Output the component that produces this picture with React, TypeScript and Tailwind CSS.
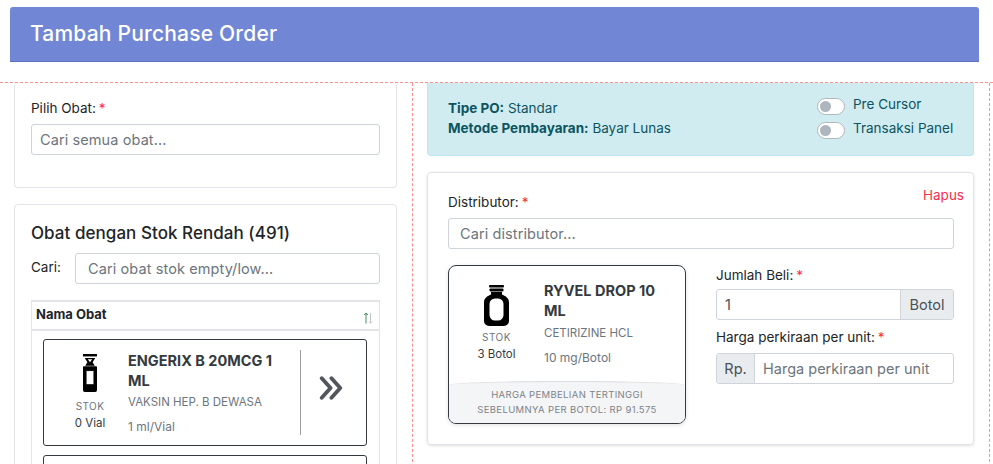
import React from 'react';

const font = "font-['Inter','Liberation_Sans',sans-serif]";

const Req = () => <span className="ml-[3px] text-[#ff2d3d]">*</span>;

const inputClass =
  'w-full h-[31px] border border-[#ced4da] rounded-[3px] bg-white text-[14.5px] tracking-[0.1px] text-[#212529] placeholder:text-[#6c757d] outline-none';

const VialIcon: React.FC = () => (
  <svg width="14" height="38" viewBox="0 0 16 39" preserveAspectRatio="none" className="block">
    <path d="M0 0h16v2.500H0z" fill="#000" />
    <path d="M2 4h12L11 8.500 13.500 12h-11L5 8.500z" fill="#000" />
    <path d="M5.500 5.500h5L8 8.500z" fill="#fff" />
    <path d="M1 12.500h14a1 1 0 0 1 1 1V37a2 2 0 0 1-2 2H2a2 2 0 0 1-2-2V13.500a1 1 0 0 1 1-1z" fill="#000" />
    <rect x="3.500" y="17" width="9" height="14.500" rx="1" fill="#fff" stroke="#000" />
  </svg>
);

const BottleIcon: React.FC = () => (
  <svg width="25" height="41" viewBox="0 0 25 41" className="block">
    <rect x="5" y="0" width="15" height="2.500" rx="1" fill="#000" />
    <rect x="5.500" y="3.500" width="14" height="3" rx="1" fill="#000" />
    <path d="M7 7h11v2.500c3 1.500 7 3 7 8V36a5 5 0 0 1-5 5H5a5 5 0 0 1-5-5V17.500c0-5 4-6.500 7-8z" fill="#000" />
    <rect x="5.500" y="13.500" width="14" height="22" rx="5.500" fill="#fff" />
  </svg>
);

const DoubleChevron: React.FC = () => (
  <svg width="24" height="24" viewBox="0 0 25 26" fill="none" stroke="#52565c" strokeWidth="4.200" strokeLinecap="round" strokeLinejoin="round">
    <path d="M2.500 2.500 12 13 2.500 23.500" />
    <path d="M13 2.500 22.500 13 13 23.500" />
  </svg>
);

const SortIcon: React.FC = () => (
  <svg width="10" height="12" viewBox="0 0 10 12" fill="none" strokeWidth="1">
    <path d="M3 11.500V1M1 3l2-2 2 2" stroke="#3f8f5f" />
    <path d="M7.500 1v10M5.800 9.500l1.700 1.700 1.700-1.700" stroke="#c3c7cc" />
  </svg>
);

const Toggle: React.FC<{ label: string }> = ({ label }) => (
  <div className="flex items-start gap-[8px] h-[24px]">
    <div className="mt-[3px] w-[28px] h-[17px] shrink-0 rounded-full border border-[#b1b7bd] bg-white flex items-center pl-[2px]">
      <div className="w-[11px] h-[11px] rounded-full bg-[#adb5bd]" />
    </div>
    <span className="text-[13.500px] leading-[18px] whitespace-nowrap text-[#0c5460]">{label}</span>
  </div>
);

const App: React.FC = () => {
  return (
    <div className={`${font} w-[993px] h-[464px] overflow-hidden bg-white text-[#212529]`}>
      <div className="pt-[7px] pl-[10px] pr-[14px]">
        <div className="h-[55px] rounded-t-[3px] bg-[#7286d6] border-b border-[#5e70bb] flex items-center pl-[20px]">
          <h1 className="text-[21px] tracking-[0.2px] font-medium text-white">Tambah Purchase Order</h1>
        </div>
      </div>

      <div className="mt-[20px] flex border-t border-dashed border-[#ff8f8f] h-[400px]">
        <div className="w-[412px] shrink-0 pl-[14px] pr-[15px]">
          <div className="h-[105px] border border-[#e2e4e8] border-t-0 rounded-[4px] px-[16px] pt-[15px]">
            <label className="block text-[13.500px] leading-[20px] mb-[6px]">Pilih Obat:<Req /></label>
            <input className={`${inputClass} px-[8px]`} placeholder="Cari semua obat..." />
          </div>

          <div className="mt-[16px] border border-[#e2e4e8] rounded-[4px] px-[16px] pt-[16px] h-[300px]">
            <h2 className="text-[17px] font-medium leading-[24px] tracking-[0.05px]">Obat dengan Stok Rendah (491)</h2>
            <div className="mt-[8px] flex items-center">
              <span className="w-[44px] shrink-0 text-[13.500px] -mt-[2px]">Cari:</span>
              <input className={`${inputClass} px-[12px]`} placeholder="Cari obat stok empty/low..." />
            </div>
            <div className="mt-[16px] border-x border-[#e2e4e8]">
              <div className="h-[31px] border-y-2 border-[#e2e4e8] flex items-center justify-between px-[4px]">
                <span className="text-[13px] font-bold -mt-[1px]">Nama Obat</span>
                <span className="mt-[5px] mr-[2px]"><SortIcon /></span>
              </div>
              <div className="pl-[11px] pr-[12px] pt-[8px]">
                <div className="h-[107px] border border-[#343a40] rounded-[3px] flex">
                  <div className="w-[84px] shrink-0 flex flex-col items-center pt-[14px] pl-[8px]">
                    <VialIcon />
                    <span className="mt-[7px] text-[10px] leading-[14px] tracking-[0.4px] text-[#6c757d]">STOK</span>
                    <span className="mt-[2px] text-[11.500px] leading-[16px] text-[#343a40]">0 Vial</span>
                  </div>
                  <div className="flex-1 pt-[11px] min-w-0">
                    <div className="text-[14.500px] font-bold leading-[20px] text-[#343a40] w-[160px]">ENGERIX B 20MCG 1 ML</div>
                    <div className="mt-[1px] text-[11.500px] leading-[20px] text-[#6c757d]">VAKSIN HEP. B DEWASA</div>
                    <div className="mt-[7px] text-[12px] leading-[16px] text-[#6c757d]">1 ml/Vial</div>
                  </div>
                  <div className="my-[10px] w-[66px] shrink-0 border-l border-[#9a9ea3] flex items-center justify-center pb-[9px] pr-[5px]">
                    <DoubleChevron />
                  </div>
                </div>
                <div className="mt-[9px] h-[40px] border border-[#343a40] rounded-[3px]" />
              </div>
            </div>
          </div>
        </div>

        <div className="w-[578px] shrink-0 border-x border-dashed border-[#ff8f8f] pl-[14px] pr-[15px]">
          <div className="h-[73px] bg-[#d1ecf1] border border-[#bee5eb] border-t-0 rounded-b-[4px] px-[20px] flex justify-between text-[#0c5460]">
            <div className="pt-[15px] text-[13.500px] leading-[20px]">
              <div><b>Tipe PO:</b> Standar</div>
              <div><b>Metode Pembayaran:</b> Bayar Lunas</div>
            </div>
            <div className="pt-[12px] w-[136px]">
              <Toggle label="Pre Cursor" />
              <Toggle label="Transaksi Panel" />
            </div>
          </div>

          <div className="relative mt-[16px] h-[273px] border border-[#e0e2e6] rounded-[4px] shadow-[0_1px_3px_rgba(0,0,0,0.12)] pl-[20px] pr-[19px] pt-[19px]">
            <span className="absolute top-[12px] right-[9px] text-[13.500px] text-[#ff2d4d]">Hapus</span>
            <label className="block text-[13.500px] leading-[20px] mb-[6px]">Distributor:<Req /></label>
            <input className={`${inputClass} px-[11px]`} placeholder="Cari distributor..." />

            <div className="mt-[16px] flex">
              <div className="w-[238px] h-[159px] shrink-0 border border-[#343a40] rounded-[8px] overflow-hidden flex flex-col shadow-[0_1px_4px_rgba(0,0,0,0.12)]">
                <div className="flex-1 flex">
                  <div className="w-[95px] shrink-0 flex flex-col items-center pt-[19px]">
                    <BottleIcon />
                    <span className="mt-[4px] text-[10px] leading-[14px] tracking-[0.5px] text-[#6c757d]">STOK</span>
                    <span className="mt-[2px] text-[11.500px] leading-[16px] text-[#343a40]">3 Botol</span>
                  </div>
                  <div className="flex-1 pt-[15px] pr-[20px]">
                    <div className="text-[14.500px] font-bold leading-[20px] text-[#343a40]">RYVEL DROP 10 ML</div>
                    <div className="mt-[2px] text-[11.500px] leading-[20px] text-[#6c757d]">CETIRIZINE HCL</div>
                    <div className="mt-[7px] text-[12px] leading-[16px] text-[#6c757d]">10 mg/Botol</div>
                  </div>
                </div>
                <div className="h-[42px] bg-[#f4f5f6] border-t border-[#dcdde0] rounded-t-[50%_4px] text-center text-[9.500px] leading-[15px] tracking-[0.35px] text-[#7d8389] pt-[5px]">
                  HARGA PEMBELIAN TERTINGGI<br />SEBELUMNYA PER BOTOL: RP 91.575
                </div>
              </div>

              <div className="ml-[30px] flex-1 min-w-0">
                <label className="block text-[13.500px] leading-[20px] mb-[4px]">Jumlah Beli:<Req /></label>
                <div className="flex h-[31px] border border-[#ced4da] rounded-[3px] overflow-hidden">
                  <input className="flex-1 min-w-0 px-[8px] text-[14.500px] text-[#495057] outline-none" defaultValue="1" />
                  <span className="w-[53px] shrink-0 bg-[#e9ecef] border-l border-[#ced4da] flex items-center justify-center text-[14.500px] text-[#495057]">Botol</span>
                </div>
                <label className="block mt-[7px] text-[13.500px] leading-[20px] mb-[6px]">Harga perkiraan per unit:<Req /></label>
                <div className="flex h-[31px] border border-[#ced4da] rounded-[3px] overflow-hidden">
                  <span className="w-[38px] shrink-0 bg-[#e9ecef] border-r border-[#ced4da] flex items-center justify-center text-[14.500px] text-[#495057]">Rp.</span>
                  <input className="flex-1 min-w-0 px-[8px] text-[14.500px] placeholder:text-[#6c757d] outline-none" placeholder="Harga perkiraan per unit" />
                </div>
              </div>
            </div>
          </div>
        </div>
      </div>
    </div>
  );
};

export default App;
